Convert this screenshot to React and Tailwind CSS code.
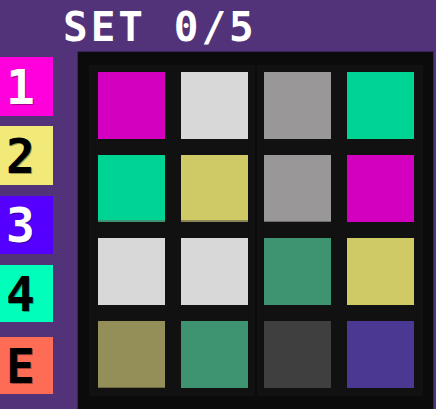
const PADS = [
  { label: "1", bg: "bg-[#ff00dc]", fg: "text-white", mt: "mt-[6px]", h: "h-[59px]" },
  { label: "2", bg: "bg-[#f2ea78]", fg: "text-black", mt: "mt-[10px]", h: "h-[59px]" },
  { label: "3", bg: "bg-[#5500ff]", fg: "text-white", mt: "mt-[11px]", h: "h-[58px]" },
  { label: "4", bg: "bg-[#00ffbb]", fg: "text-black", mt: "mt-[11px]", h: "h-[57px]" },
  { label: "E", bg: "bg-[#ff6c55]", fg: "text-black", mt: "mt-[15px]", h: "h-[57px]" },
];

// two halves of the board, each 2 columns x 4 rows
const LEFT = [
  ["bg-[#d400c0]", "bg-[#d8d8d8]"],
  ["bg-[#00d494] border-b-2 border-[#3e9470]", "bg-[#cfca66] border-b-2 border-[#8a8556]"],
  ["bg-[#d8d8d8]", "bg-[#d8d8d8]"],
  ["bg-[#948e58] border-b border-[#6d6840]", "bg-[#3e9470]"],
];

const RIGHT = [
  ["bg-[#999797]", "bg-[#00d494]"],
  ["bg-[#999797] border-b border-[#6e6e6e]", "bg-[#d400c0]"],
  ["bg-[#3e9470]", "bg-[#cfca66]"],
  ["bg-[#3f3f3f]", "bg-[#4b3893]"],
];

function Half({ cells, pad }) {
  return (
    <div className={`grid w-[166px] grid-cols-[67px_67px] gap-x-4 gap-y-4 bg-[#111111] pt-[7px] pb-[8px] ${pad}`}>
      {cells.flat().map((c, i) => (
        <div key={i} className={`h-[67px] w-[67px] ${c}`} />
      ))}
    </div>
  );
}

export default function App() {
  return (
    <div
      className="h-[409px] w-[436px] overflow-hidden bg-[#52337a]"
      style={{ fontFamily: '"DejaVu Sans Mono", monospace' }}
    >
      <div className="h-[51px] pl-[63px] pt-[7px] text-[41px] font-bold leading-[41px] tracking-[3px] text-white whitespace-pre">
        SET 0/5
      </div>
      <div className="flex">
        <div className="flex w-[53px] flex-col">
          {PADS.map((p) => (
            <div
              key={p.label}
              className={`flex items-center pl-[6px] text-[48px] font-bold leading-none ${p.bg} ${p.fg} ${p.mt} ${p.h} [text-shadow:1px_1px_0_rgba(0,0,0,0.35)]`}
            >
              {p.label}
            </div>
          ))}
        </div>
        <div className="ml-[24px] h-[400px] w-[357px] border border-[#3d2560] bg-[#0b0b0b] pl-[11px] pt-[13px]">
          <div className="flex gap-[2px]">
            <Half cells={LEFT} pad="pl-[9px]" />
            <Half cells={RIGHT} pad="pl-[7px]" />
          </div>
        </div>
      </div>
    </div>
  );
}
